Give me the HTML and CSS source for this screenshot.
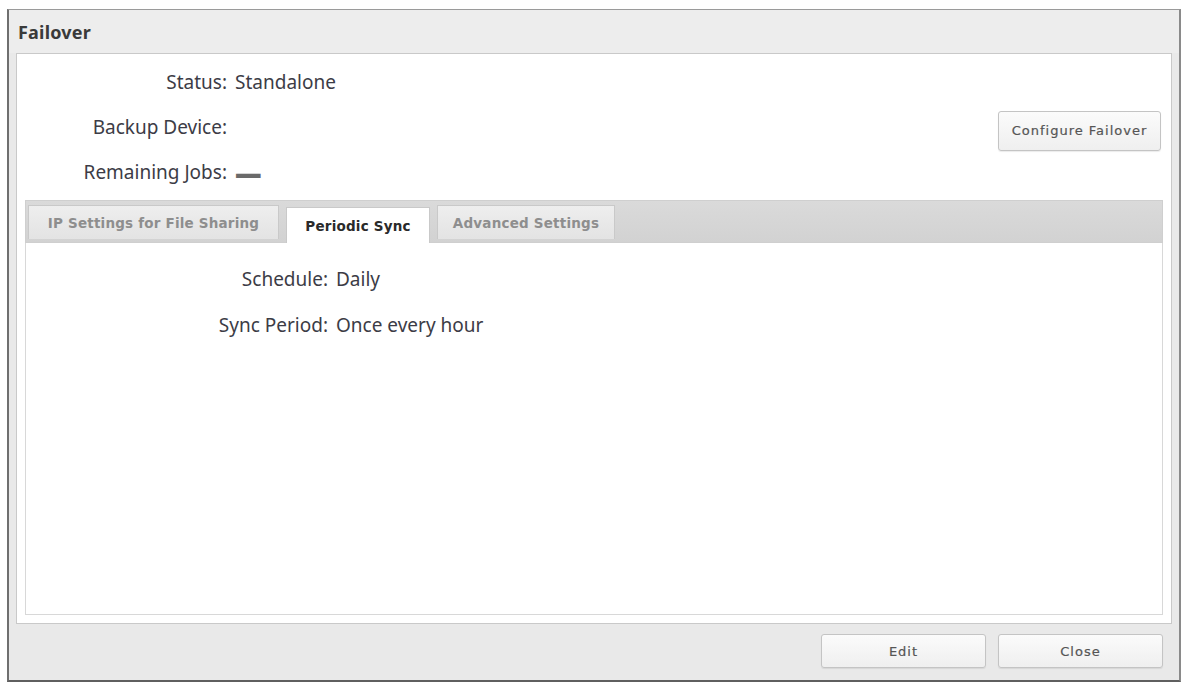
FILE: index.html
```html
<!DOCTYPE html>
<html lang="en">
<head>
<meta charset="utf-8">
<title>Failover</title>
<link rel="stylesheet" href="styles.css">
</head>
<body>
<div class="window">
  <div class="titlebar">Failover</div>
  <div class="panel">
    <div class="info">
      <div class="rows">
        <div class="row"><span class="label">Status:</span><span class="value">Standalone</span></div>
        <div class="row"><span class="label">Backup Device:</span><span class="value"></span></div>
        <div class="row"><span class="label">Remaining Jobs:</span><span class="value dash">—</span></div>
      </div>
      <button class="btn btn-config">Configure Failover</button>
    </div>
    <div class="tabs">
      <div class="tabbar">
        <div class="tab tab-ip">IP Settings for File Sharing</div>
        <div class="tab tab-sync active">Periodic Sync</div>
        <div class="tab tab-adv">Advanced Settings</div>
      </div>
      <div class="tabcontent">
        <div class="row trow"><span class="label tlabel">Schedule:</span><span class="value">Daily</span></div>
        <div class="row trow"><span class="label tlabel">Sync Period:</span><span class="value">Once every hour</span></div>
      </div>
    </div>
  </div>
  <div class="footer">
    <button class="btn btn-foot">Edit</button>
    <button class="btn btn-foot">Close</button>
  </div>
</div>
</body>
</html>
```
FILE: styles.css
```css
* { box-sizing: border-box; }
html, body { margin: 0; padding: 0; background: #ffffff; }
body { width: 1187px; height: 689px; overflow: hidden; font-family: "Noto Sans", "Open Sans", sans-serif; }

.window {
  margin: 9px 0 0 7px;
  width: 1174px;
  height: 673px;
  background: #e9e9e9;
  border: 1px solid #9a9a9a;
  border-left: 2px solid #6f6f6f;
  border-bottom: 2px solid #5f5f5f;
  border-right: 2px solid #8a8a8a;
  display: flex;
  flex-direction: column;
}

.titlebar {
  height: 43px;
  padding-left: 9px;
  display: flex;
  align-items: center;
  font-family: "Noto Sans", sans-serif;
  font-weight: 700;
  font-size: 18px;
  letter-spacing: 0.2px;
  color: #3a3a3a;
  background: #ededed;
}

.panel {
  margin: 0 7px 0 7px;
  height: 571px;
  background: #ffffff;
  border: 1px solid #c9c9c9;
  display: flex;
  flex-direction: column;
  padding: 0 8px 8px 8px;
}

.info {
  display: flex;
  align-items: center;
  justify-content: space-between;
  padding-top: 0;
  height: 146px;
}

.rows { display: flex; flex-direction: column; }

.row {
  display: flex;
  align-items: center;
  height: 45px;
  font-size: 19px;
  color: #3c3c46;
}

.label {
  width: 210px;
  text-align: right;
  padding-right: 8px;
}

.value { color: #3c3c46; }
.dash {
  display: inline-block;
  color: #6a6a6a;
  font-weight: 700;
  transform: scale(1.4, 2);
  transform-origin: left center;
}

.btn {
  font-family: "DejaVu Sans", Verdana, sans-serif;
  font-size: 13px;
  letter-spacing: 1px;
  color: #555;
  background: linear-gradient(#fbfbfb, #efefef);
  border: 1px solid #c4c4c4;
  border-radius: 3px;
  box-shadow: 0 1px 1px rgba(0,0,0,0.08);
  -webkit-text-stroke: 0.2px #555;
}

.btn-config {
  width: 163px;
  height: 40px;
  margin-top: 7px;
  margin-right: 2px;
  padding: 0;
}

.tabs {
  flex: 1;
  display: flex;
  flex-direction: column;
}

.tabbar {
  height: 43px;
  background: linear-gradient(#dadada, #d2d2d2);
  border: 1px solid #cfcfcf;
  display: flex;
  align-items: flex-end;
  gap: 7px;
  padding-left: 2px;
}

.tab {
  height: 34px;
  display: flex;
  align-items: center;
  justify-content: center;
  font-family: "DejaVu Sans", Verdana, sans-serif;
  font-weight: 700;
  font-size: 13.5px;
  letter-spacing: 0.2px;
  color: #8e8e8e;
  background: linear-gradient(#eeeeee, #e3e3e3);
  border: 1px solid #c9c9c9;
  border-bottom: none;
  margin-bottom: 3px;
  white-space: nowrap;
}

.tab.active {
  background: #ffffff;
  color: #2a2a2a;
  height: 36px;
  margin-bottom: -1px;
}

.tab-ip { width: 251px; }
.tab-sync { width: 144px; }
.tab-adv { width: 178px; }

.tabcontent {
  flex: 1;
  border: 1px solid #d8d8d8;
  border-top: none;
  padding-top: 13px;
  background: #fff;
}

.trow { height: 46px; }
.tlabel { width: 310px; }

.footer {
  flex: 1;
  display: flex;
  align-items: center;
  justify-content: flex-end;
  gap: 12px;
  padding-right: 16px;
  padding-bottom: 2px;
}

.btn-foot {
  width: 165px;
  height: 34px;
  padding: 0;
}
```
